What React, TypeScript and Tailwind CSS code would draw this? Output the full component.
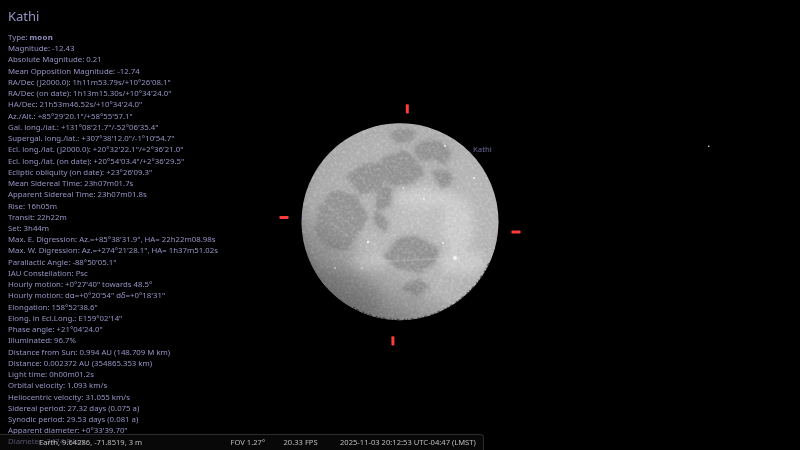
const lines: [string, string?][] = [
  ["Type: ", "moon"],
  ["Magnitude: -12.43"],
  ["Absolute Magnitude: 0.21"],
  ["Mean Opposition Magnitude: -12.74"],
  ["RA/Dec (J2000.0): 1h11m53.79s/+10°26'08.1\""],
  ["RA/Dec (on date): 1h13m15.30s/+10°34'24.0\""],
  ["HA/Dec: 21h53m46.52s/+10°34'24.0\""],
  ["Az./Alt.: +85°29'20.1\"/+58°55'57.1\""],
  ["Gal. long./lat.: +131°08'21.7\"/-52°06'35.4\""],
  ["Supergal. long./lat.: +307°38'12.0\"/-1°10'54.7\""],
  ["Ecl. long./lat. (J2000.0): +20°32'22.1\"/+2°36'21.0\""],
  ["Ecl. long./lat. (on date): +20°54'03.4\"/+2°36'29.5\""],
  ["Ecliptic obliquity (on date): +23°26'09.3\""],
  ["Mean Sidereal Time: 23h07m01.7s"],
  ["Apparent Sidereal Time: 23h07m01.8s"],
  ["Rise: 16h05m"],
  ["Transit: 22h22m"],
  ["Set: 3h44m"],
  ["Max. E. Digression: Az.=+85°38'31.9\", HA= 22h22m08.98s"],
  ["Max. W. Digression: Az.=+274°21'28.1\", HA= 1h37m51.02s"],
  ["Parallactic Angle: -88°50'05.1\""],
  ["IAU Constellation: Psc"],
  ["Hourly motion: +0°27'40\" towards 48.5°"],
  ["Hourly motion: dα=+0°20'54\" dδ=+0°18'31\""],
  ["Elongation: 158°52'38.6\""],
  ["Elong. in Ecl.Long.: E159°02'14\""],
  ["Phase angle: +21°04'24.0\""],
  ["Illuminated: 96.7%"],
  ["Distance from Sun: 0.994 AU (148.709 M km)"],
  ["Distance: 0.002372 AU (354865.353 km)"],
  ["Light time: 0h00m01.2s"],
  ["Orbital velocity: 1.093 km/s"],
  ["Heliocentric velocity: 31.055 km/s"],
  ["Sidereal period: 27.32 days (0.075 a)"],
  ["Synodic period: 29.53 days (0.081 a)"],
  ["Apparent diameter: +0°33'39.70\""],
  ["Diameter: 3474.8 km"],
];

const maria = [
  "M392 135 L398 130 L409 129 L415 133 L410 140 L398 142 Z",
  "M417 146 L433 140 L446 147 L451 155 L443 163 L430 158 L421 158 L416 151 Z",
  "M383 159 L403 152 L416 161 L423 173 L411 183 L392 184 L385 175 Z",
  "M349 178 L362 166 L383 162 L386 177 L374 190 L360 192 Z",
  "M433 173 L449 172 L453 181 L441 186 Z",
  "M320 207 L333 193 L356 197 L366 217 L358 233 L348 248 L328 247 L316 230 Z",
  "M398 240 L417 237 L437 250 L434 263 L417 271 L400 267 L386 257 Z",
  "M405 287 L417 280 L428 287 L417 296 Z",
  "M377 212 L388 223 L383 231 L376 223 Z",
  "M378 185 L392 190 L388 205 L378 208 Z",
];

const rayOrigin: [number, number] = [455, 258];
const rayEnds: [number, number][] = [
  [415, 322], [500, 296], [500, 246], [470, 180], [345, 262], [447, 325], [385, 262], [440, 190], [480, 285],
];

export default function App() {
  return (
    <div className="relative w-[800px] h-[450px] overflow-hidden bg-black font-['Noto_Sans',sans-serif] text-[#9494c4]">
      <svg className="absolute left-0 top-0 w-[800px] h-[450px]" viewBox="0 0 800 450" fill="none">
        <defs>
          <radialGradient id="disc" cx="0.6" cy="0.48" r="0.62">
            <stop offset="0" stopColor="#c0c0c0" />
            <stop offset="0.6" stopColor="#b4b4b4" />
            <stop offset="0.88" stopColor="#a8a8a8" />
            <stop offset="1" stopColor="#949494" />
          </radialGradient>
          <linearGradient id="shade" x1="0.7" y1="0.3" x2="0.25" y2="1">
            <stop offset="0.55" stopColor="#000" stopOpacity="0" />
            <stop offset="1" stopColor="#000" stopOpacity="0.4" />
          </linearGradient>
          <filter id="mare" x="-10%" y="-10%" width="120%" height="120%">
            <feTurbulence type="fractalNoise" baseFrequency="0.07" numOctaves="2" seed="5" result="n" />
            <feDisplacementMap in="SourceGraphic" in2="n" scale="7" xChannelSelector="R" yChannelSelector="G" />
            <feGaussianBlur stdDeviation="1.8" />
          </filter>
          <filter id="b6"><feGaussianBlur stdDeviation="5" /></filter>
          <filter id="b05"><feGaussianBlur stdDeviation="0.45" /></filter>
          <filter id="tex" x="0" y="0" width="100%" height="100%">
            <feTurbulence type="fractalNoise" baseFrequency="0.35" numOctaves="3" seed="7" />
            <feColorMatrix values="0 0 0 0 1  0 0 0 0 1  0 0 0 0 1  1.8 0 0 0 -0.74" />
            <feGaussianBlur stdDeviation="0.35" />
          </filter>
          <filter id="tex2" x="0" y="0" width="100%" height="100%">
            <feTurbulence type="fractalNoise" baseFrequency="0.28" numOctaves="3" seed="23" />
            <feColorMatrix values="0 0 0 0 0.35  0 0 0 0 0.35  0 0 0 0 0.35  1.6 0 0 0 -0.72" />
            <feGaussianBlur stdDeviation="0.35" />
          </filter>
          <clipPath id="moon"><circle cx="400" cy="221.7" r="98.5" /></clipPath>
        </defs>
        <g clipPath="url(#moon)">
          <rect x="300" y="120" width="200" height="204" fill="url(#disc)" />
          <g fill="#dcdcdc" filter="url(#b6)" opacity="0.55">
            <ellipse cx="425" cy="198" rx="32" ry="10" />
            <ellipse cx="458" cy="225" rx="16" ry="28" />
            <ellipse cx="462" cy="262" rx="24" ry="12" />
            <ellipse cx="370" cy="262" rx="18" ry="9" />
          </g>
          <g fill="#9a9a9a" stroke="#9a9a9a" strokeWidth="5" filter="url(#b6)" opacity="0.7">
            {maria.map((d, i) => <path key={i} d={d} />)}
            <ellipse cx="345" cy="292" rx="36" ry="16" transform="rotate(20 345 292)" />
          </g>
          <g fill="#929292" stroke="#929292" strokeWidth="2.5" filter="url(#mare)">
            {maria.map((d, i) => <path key={i} d={d} />)}
          </g>
          <rect x="300" y="120" width="200" height="204" filter="url(#tex)" opacity="0.3" />
          <rect x="300" y="120" width="200" height="204" filter="url(#tex2)" opacity="0.3" />
          <g stroke="#ebebeb" strokeWidth="0.5" opacity="0.35" filter="url(#b05)">
            {rayEnds.map(([x, y], i) => (
              <line key={i} x1={rayOrigin[0]} y1={rayOrigin[1]} x2={x} y2={y} />
            ))}
            <line x1="320" y1="200" x2="378" y2="248" />
            <line x1="330" y1="222" x2="390" y2="268" />
          </g>
          <g fill="#f4f4f4" filter="url(#b05)">
            <circle cx="455" cy="258" r="2" />
            <circle cx="335" cy="268" r="1" />
            <circle cx="368" cy="242" r="1.2" />
            <circle cx="403" cy="188" r="0.8" />
            <circle cx="425" cy="189" r="0.8" />
            <circle cx="443" cy="243" r="0.9" />
            <circle cx="474" cy="178" r="1" />
            <circle cx="445" cy="146" r="1" />
            <circle cx="424" cy="199" r="0.9" />
            <circle cx="362" cy="268" r="1.6" opacity="0.6" />
          </g>
          <rect x="300" y="120" width="200" height="204" fill="url(#shade)" />
          <path d="M353 308 A98 98 0 0 0 490 262" stroke="#1c1c1c" strokeWidth="2.6" strokeDasharray="1.5 2 3 4 2 1.5" opacity="0.6" filter="url(#b05)" />
        </g>
        <g fill="#ff3a3a" filter="url(#b05)">
          <rect x="405.8" y="104.3" width="3" height="9.2" rx="1" />
          <rect x="391.4" y="336.2" width="3" height="9.2" rx="1" />
          <rect x="279.4" y="216" width="9.2" height="3" rx="1" />
          <rect x="511.4" y="230.6" width="9.2" height="3" rx="1" />
        </g>
        <circle cx="708.7" cy="146.3" r="0.8" fill="#eeeeee" />
      </svg>

      <div className="relative flex flex-col pl-2 pt-[6px] blur-[0.25px]">
        <h1 className="text-[13px] leading-[20px] mb-[6px]">Kathi</h1>
        <div className="flex flex-col text-[7.8px] leading-[11.23px] whitespace-nowrap">
          {lines.map(([t, b], i) => (
            <div key={i}>
              {t}
              {b && <span className="font-bold tracking-[0.3px]">{b}</span>}
            </div>
          ))}
        </div>
      </div>

      <div className="absolute left-[473px] top-[143.5px] text-[7.8px] leading-[11px] text-[#6c6c9c] blur-[0.25px]">Kathi</div>

      <div className="absolute left-0 bottom-0 w-[484px] h-[16px] flex items-center rounded-tr-[4px] border-t border-r border-[#2c2c2c] bg-[#10101080] text-[7.6px] leading-[11px] text-[#bdbdbd] whitespace-nowrap">
        <span className="ml-[39px] w-[191.5px] blur-[0.25px]">Earth, 9.64286, -71.8519, 3 m</span>
        <span className="w-[53px] blur-[0.25px]">FOV 1.27°</span>
        <span className="w-[56.5px] blur-[0.25px]">20.33 FPS</span>
        <span className="blur-[0.25px]">2025-11-03 20:12:53 UTC-04:47 (LMST)</span>
      </div>
    </div>
  );
}
